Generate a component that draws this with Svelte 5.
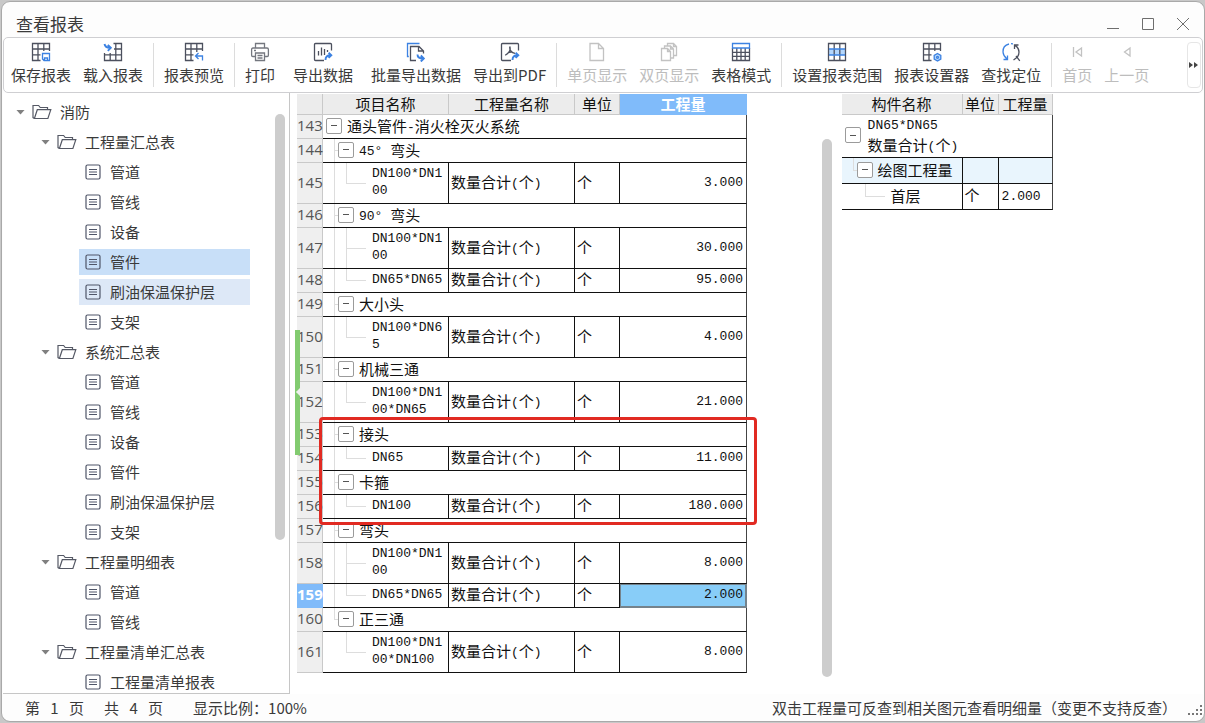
<script>
  const tools = [
    { icon: 'save', label: '保存报表' },
    { icon: 'load', label: '载入报表' },
    { sep: true },
    { icon: 'preview', label: '报表预览' },
    { sep: true },
    { icon: 'print', label: '打印', wide: true },
    { icon: 'export', label: '导出数据', wide: true },
    { icon: 'batch', label: '批量导出数据' },
    { icon: 'pdf', label: '导出到PDF' },
    { sep: true },
    { icon: 'single', label: '单页显示', off: true },
    { icon: 'double', label: '双页显示', off: true },
    { icon: 'table', label: '表格模式' },
    { sep: true },
    { icon: 'range', label: '设置报表范围' },
    { icon: 'config', label: '报表设置器' },
    { icon: 'find', label: '查找定位' },
    { sep: true },
    { icon: 'first', label: '首页', off: true },
    { icon: 'prev', label: '上一页', off: true }
  ];

  const groups = [
    { name: '工程量汇总表', items: ['管道', '管线', '设备', '管件', '刷油保温保护层', '支架'] },
    { name: '系统汇总表', items: ['管道', '管线', '设备', '管件', '刷油保温保护层', '支架'] },
    { name: '工程量明细表', items: ['管道', '管线'] },
    { name: '工程量清单汇总表', items: ['工程量清单报表'] }
  ];

  const rows = [
    { level: 0, name: '通头管件-消火栓灭火系统' },
    { level: 1, name: '45° 弯头' },
    { level: 2, name: 'DN100*DN100', amount: '3.000', tall: true, end: true },
    { level: 1, name: '90° 弯头' },
    { level: 2, name: 'DN100*DN100', amount: '30.000', tall: true },
    { level: 2, name: 'DN65*DN65', amount: '95.000', end: true },
    { level: 1, name: '大小头' },
    { level: 2, name: 'DN100*DN65', amount: '4.000', tall: true, end: true },
    { level: 1, name: '机械三通' },
    { level: 2, name: 'DN100*DN100*DN65', amount: '21.000', tall: true, end: true },
    { level: 1, name: '接头' },
    { level: 2, name: 'DN65', amount: '11.000', end: true },
    { level: 1, name: '卡箍' },
    { level: 2, name: 'DN100', amount: '180.000', end: true },
    { level: 1, name: '弯头' },
    { level: 2, name: 'DN100*DN100', amount: '8.000', tall: true },
    { level: 2, name: 'DN65*DN65', amount: '2.000', end: true, current: true },
    { level: 1, name: '正三通', lastGroup: true },
    { level: 2, name: 'DN100*DN100*DN100', amount: '8.000', tall: true, end: true, afterLast: true }
  ];

  // Half-width runs are set in the monospaced face, the rest in the CJK face.
  function runs(text) {
    return text.match(/[\u0020-\u00ff]+|[^\u0020-\u00ff]+/g) ?? [];
  }
  const isHalf = (run) => run.charCodeAt(0) < 256;
</script>

{#snippet mixed(text)}{#each runs(text) as run}{#if isHalf(run)}<span class="half">{run}</span>{:else}{run}{/if}{/each}{/snippet}

{#snippet toggle()}
  <button class="toggle" type="button" aria-label="折叠"><i></i></button>
{/snippet}

{#snippet folder()}
  <svg class="folder" viewBox="0 0 20 16" width="20" height="16">
    <path d="M2.6 14.5 1 13.6V1.5h5.6l1.6 2h7.3v2.2M2.4 14.5 5.3 5.7h13.5l-2.9 8.8z" />
  </svg>
{/snippet}

{#snippet glyph(name)}
  <svg class="glyph" viewBox="0 0 20 20" width="20" height="20">
    {#if name === 'save'}
      <path d="M18.500 9V1.500h-17v17h8M1.500 7h17M1.500 12.800h8M7 1.500v17M12.800 1.500V9" />
      <path class="blue" d="M11.500 11.500h7v7h-5.500l-1.500-1.500zM13.500 18.500v-2.500h3v2.500" />
    {:else if name === 'load'}
      <path d="M10.500 1.500h8v17h-17V11M18.500 7H11M18.500 12.800h-17M7.200 11v7.500M12.800 1.500v17" />
      <path class="blue thick" d="M1.500 2c.5 2.600 2 3.800 5.500 3.800M4.800 2.800l3 3-3 3" />
    {:else if name === 'preview'}
      <path d="M18.500 9V1.500h-17v17h8M1.500 7h17M1.500 12.800h8M7 1.500v17M12.800 1.500V10" />
      <path class="blue" d="M18.500 18.500v-4.500h-6.500M14.500 11l-3 3 3 3" />
    {:else if name === 'print'}
      <path d="M5.500 6V1.500h9V6M5 14.500H2.800a1.200 1.200 0 0 1-1.200-1.200V7.500Q1.600 6 3 6h14q1.400 0 1.400 1.500v5.800a1.200 1.200 0 0 1-1.200 1.200H15M5.500 11h9v7.500h-9zM7.500 13.500h5M7.500 16h5M4 8.500h2" />
    {:else if name === 'export'}
      <path d="M18.500 8.500v-6a1 1 0 0 0-1-1h-15a1 1 0 0 0-1 1v15a1 1 0 0 0 1 1h8.500M5.500 13.500V9M8.500 13.500v-8M11.500 13V7M14.500 10V8" />
      <path class="blue thick" d="M12.500 18c0-3.400 1.500-4.700 5-4.700M15.600 10.700l2.700 2.600-2.700 2.600" />
    {:else if name === 'batch'}
      <path class="blue" d="M2.800 14.500H1.500V1.500h12" />
      <path d="M10 18.500H4.500v-14h8.500l4.500 4.500v2.500M12.500 4.500V9h5" />
      <path class="blue thick" d="M11.500 12.500c0 3 1.500 4 5.500 4M14.800 13.500l3 3-3 3" />
    {:else if name === 'pdf'}
      <path d="M18.500 8.500v-6a1 1 0 0 0-1-1h-15a1 1 0 0 0-1 1v15a1 1 0 0 0 1 1h8.500M9.800 4.500c1 3 .2 6-4.600 8.800M9.800 4.500c-.5 4 1.500 6 5.200 6.800M7.600 11c1.800-.8 3.200-1 5-.7" />
      <path class="blue thick" d="M12.500 18c0-3.400 1.500-4.700 5-4.700M15.600 10.700l2.700 2.600-2.700 2.600" />
    {:else if name === 'single'}
      <path d="M3 1.500h8.500l5 5v12H3zM11.500 1.500v5h5" />
    {:else if name === 'double'}
      <path d="M2.500 6.500h6l3 3v9h-9zM8.500 6.500v3h3M5.500 6.500V4h6l3 3v9h-3M11.500 4v3h3M8.500 4V1.500h6l3 3v9h-3M14.500 1.500v3h3" />
    {:else if name === 'table'}
      <path d="M1.500 6v12.500h17V6M1.500 10.300h17M1.500 14.400h17M5.800 6v12.500M10 6v12.500M14.200 6v12.500" />
      <path class="blue" d="M1.500 6V1.500h17V6z" />
    {:else if name === 'range'}
      <rect class="tint" x="1.500" y="7" width="17" height="6" />
      <path d="M1.500 1.500h17v17h-17zM7.200 1.500v17M12.800 1.500v17" />
      <path class="blue" d="M2 7h16M2 13h16" />
    {:else if name === 'config'}
      <path d="M18.500 9V1.500h-17v17h8M1.500 7h17M1.500 12.800h8M7 1.500v17M12.800 1.500V9" />
      <path class="blue fill" d="m15.500 11.500 3.300 1.900v3.700l-3.300 1.900-3.300-1.900v-3.700z" />
      <circle class="blue" cx="15.500" cy="15.300" r="1" />
    {:else if name === 'find'}
      <path class="blue" d="M8 2C4 3 1.800 6 2 10c.2 3 1.500 5 4 7M10 1.700l2 .2M2.500 17.500h4v-4" />
      <path d="M17.500 3h-4v4M14 3.500c2.500 1.500 4 4 4 6.500 0 2-.5 3.500-1.500 5M16.500 15l-4 3M15 14l3.800 4.800" />
    {:else if name === 'first'}
      <path d="M6.500 5v10M14.500 6v8L9 10z" />
    {:else if name === 'prev'}
      <path d="M13 6v8l-5.500-4z" />
    {/if}
  </svg>
{/snippet}

<div class="window">
  <header class="titlebar">
    <h1>查看报表</h1>
    <div class="controls">
      <button type="button" aria-label="最小化"><svg viewBox="0 0 14 14" width="14" height="14"><path d="M1 11.500h12" /></svg></button>
      <button type="button" aria-label="最大化"><svg viewBox="0 0 14 14" width="14" height="14"><path d="M1.500 1.500h11v11h-11z" /></svg></button>
      <button type="button" aria-label="关闭"><svg viewBox="0 0 14 14" width="14" height="14"><path d="m1 1 12 12M13 1 1 13" /></svg></button>
    </div>
  </header>

  <div class="toolbar" role="toolbar">
    {#each tools as tool}
      {#if tool.sep}
        <span class="sep"></span>
      {:else}
        <button class="tool" class:wide={tool.wide} class:soft={tool.icon === 'print'} type="button" disabled={tool.off}>
          {@render glyph(tool.icon)}
          <span>{tool.label}</span>
        </button>
      {/if}
    {/each}
    <button class="more" type="button" aria-label="更多">
      <svg viewBox="0 0 10 8" width="10" height="8"><path d="M0 1v6l4-3zM5 1v6l4-3z" /></svg>
    </button>
  </div>

  <main>
    <nav class="tree">
      <ul>
        <li class="branch root"><i class="caret"></i>{@render folder()}<span>消防</span></li>
        {#each groups as group, g}
          <li class="branch"><i class="caret"></i>{@render folder()}<span>{group.name}</span></li>
          {#each group.items as item, n}
            <li class="leaf">
              <a href="#report" class:selected={g === 0 && n === 3} class:hovered={g === 0 && n === 4}>
                <svg viewBox="0 0 16 16" width="16" height="16"><rect x="1" y="1" width="14" height="14" rx="1.500" /><path d="M4 5.500h8M4 8h8M4 10.500h8" /></svg>
                <span>{item}</span>
              </a>
            </li>
          {/each}
        {/each}
      </ul>
      <div class="thumb"></div>
    </nav>

    <section class="pane report">
      <div class="splitgrip"></div>
      <div class="sheet">
        <table class="grid">
          <colgroup><col class="c-no" /><col class="c-name" /><col class="c-qty" /><col class="c-unit" /><col class="c-amount" /></colgroup>
          <thead>
            <tr><th></th><th>项目名称</th><th>工程量名称</th><th>单位</th><th class="active">工程量</th></tr>
          </thead>
          <tbody>
            {#each rows as row, n}
              <tr class:tall={row.tall}>
                <th class="no" class:active={row.current}>{143 + n}</th>
                {#if row.level < 2}
                  <td colspan="4" class="level{row.level} last" class:lastgroup={row.lastGroup}>
                    <div class="node">{@render toggle()}<span>{@render mixed(row.name)}</span></div>
                  </td>
                {:else}
                  <td class="level2 code" class:end={row.end} class:afterlast={row.afterLast}>{row.name}</td>
                  <td class="text">{@render mixed('数量合计(个)')}</td>
                  <td class="text">个</td>
                  <td class="amount code last" class:current={row.current}>{row.amount}</td>
                {/if}
              </tr>
            {/each}
          </tbody>
        </table>
        <div class="marker"></div>
      </div>
      <div class="thumb"></div>
    </section>

    <section class="pane detail">
      <table class="grid">
        <colgroup><col class="d-name" /><col class="d-unit" /><col class="d-amount" /></colgroup>
        <thead>
          <tr><th>构件名称</th><th>单位</th><th>工程量</th></tr>
        </thead>
        <tbody>
          <tr class="double">
            <td colspan="3" class="last">
              <div class="node">
                {@render toggle()}
                <div class="lines"><span class="code">DN65*DN65</span><span>{@render mixed('数量合计(个)')}</span></div>
              </div>
            </td>
          </tr>
          <tr class="tinted">
            <td class="level1 lastgroup"><div class="node">{@render toggle()}<span>绘图工程量</span></div></td>
            <td></td>
            <td class="last"></td>
          </tr>
          <tr>
            <td class="level2 end afterlast">首层</td>
            <td class="text">个</td>
            <td class="text code last">2.000</td>
          </tr>
        </tbody>
      </table>
    </section>
  </main>

  <footer>
    <span class="page">第</span><span class="num">1</span><span>页</span>
    <span class="total">共</span><span class="num">4</span><span>页</span>
    <span class="zoom">显示比例：100%</span>
    <span class="hint">双击工程量可反查到相关图元查看明细量（变更不支持反查）</span>
    <svg class="grip" viewBox="0 0 15 15" width="15" height="15"><path d="M12 2h2v2h-2zM12 6h2v2h-2zM12 10h2v2h-2zM8 6h2v2H8zM8 10h2v2H8zM4 10h2v2H4zM0 10h2v2H0z" /></svg>
  </footer>
</div>

<style>
  :global(body) {
    margin: 0;
    background: #c8c8c8;
  }
  .window {
    display: flex;
    flex-direction: column;
    box-sizing: border-box;
    height: calc(100vh - 2px);
    margin: 1px 0 1px 1px;
    padding: 0 1px;
    overflow: hidden;
    border: 1px solid #a9a9a9;
    border-radius: 9px;
    background: #fdfdfd;
    color: #3a3a3a;
    font: 15px/20px "Noto Sans CJK SC", sans-serif;
  }
  button {
    margin: 0;
    padding: 0;
    border: 0;
    background: none;
    color: inherit;
    font: inherit;
  }
  svg {
    display: block;
    flex: none;
    fill: none;
  }
  .titlebar {
    display: flex;
    flex: none;
    align-items: center;
    justify-content: space-between;
    height: 35px;
    padding: 0 13px;
  }
  h1 {
    margin: 0;
    padding-top: 8px;
    font-size: 17px;
    font-weight: 400;
    line-height: 24px;
  }
  .controls {
    display: flex;
    gap: 21px;
    padding-top: 9px;
  }
  .controls path {
    stroke: #6e6e6e;
  }
  .toolbar {
    display: flex;
    flex: none;
    align-items: center;
    box-sizing: border-box;
    height: 56px;
    padding-left: 1px;
    border: 1px solid #cfcfd2;
    border-radius: 5px;
    background: #fff;
  }
  .tool {
    display: flex;
    flex: none;
    flex-direction: column;
    align-items: center;
    gap: 3px;
    padding: 0 6px 4px;
    white-space: nowrap;
  }
  .tool.wide {
    padding-right: 12px;
  }
  .tool:disabled {
    color: #bdbdbd;
  }
  .glyph {
    stroke: #4c505e;
    stroke-width: 1.3;
  }
  .soft .glyph {
    stroke: #74777f;
  }
  .tool:disabled .glyph {
    stroke: #c2c2c2;
  }
  .glyph .blue {
    stroke: #3c82e2;
  }
  .glyph .thick {
    stroke-width: 1.9;
  }
  .glyph .fill {
    fill: #b4d6fb;
  }
  .glyph .tint {
    fill: #b4d6fb;
    stroke: none;
  }
  .sep {
    flex: none;
    width: 1px;
    height: 44px;
    margin: 0 4px;
    background: #dcdcdc;
  }
  .more {
    display: grid;
    place-items: center;
    box-sizing: border-box;
    width: 14px;
    height: 46px;
    margin: 0 1px 0 auto;
    border: 1px solid #e6e6e6;
    border-radius: 4px;
  }
  .more path {
    fill: #444;
  }
  main {
    display: grid;
    flex: 1;
    grid-template-columns: 287px minmax(0, 29fr) minmax(0, 19fr);
    min-height: 0;
    background: #fff;
  }
  .tree {
    display: flex;
    align-items: flex-start;
    min-height: 0;
    overflow: hidden;
    border-right: 1px solid #c6c6c6;
    border-bottom: 1px solid #c6c6c6;
  }
  ul {
    flex: 1;
    margin: 0;
    padding: 4px 0 0;
    list-style: none;
  }
  .branch,
  .leaf {
    display: flex;
    align-items: center;
    height: 30px;
    padding-left: 38px;
  }
  .branch.root {
    padding-left: 13px;
  }
  .leaf {
    padding-left: 76px;
  }
  .leaf a {
    display: flex;
    flex: 1;
    align-items: center;
    gap: 9px;
    height: 26px;
    margin-right: 25px;
    padding-left: 6px;
    color: inherit;
    text-decoration: none;
  }
  .leaf a.selected {
    background: #c8dff8;
  }
  .leaf a.hovered {
    background: #dde8f7;
  }
  .leaf svg {
    stroke: #4f5568;
    stroke-width: 1.2;
  }
  .caret {
    width: 9px;
    height: 5px;
    margin-right: 7px;
    background: #808080;
    clip-path: polygon(0 0, 100% 0, 50% 100%);
  }
  .folder {
    margin-right: 8px;
    stroke: #555965;
    stroke-width: 1.2;
  }
  .thumb {
    flex: none;
    width: 10px;
    border-radius: 5px;
    background: #cdcdcd;
  }
  .tree .thumb {
    height: 71%;
    margin: 21px 4px 0 0;
  }
  .pane {
    display: flex;
    align-items: flex-start;
    min-width: 0;
    padding-top: 1px;
  }
  .report {
    position: relative;
    padding-left: 7px;
  }
  .report .thumb {
    align-self: stretch;
    margin: 45px 10px 17px auto;
  }
  .splitgrip {
    position: absolute;
    top: 237px;
    left: 5px;
    z-index: 1;
    width: 5px;
    height: 125px;
    background: #82cb70;
    clip-path: polygon(0 0, 100% 0, 100% 58px, 1px 62px, 100% 66px, 100% 100%, 0 100%);
  }
  .sheet {
    position: relative;
  }
  .marker {
    position: absolute;
    top: 323px;
    left: 22px;
    box-sizing: border-box;
    width: 438px;
    height: 108px;
    border: 3px solid #e12a22;
    border-radius: 4px;
  }
  .grid {
    table-layout: fixed;
    border-spacing: 0;
    color: #111;
    line-height: 17px;
  }
  .report .grid {
    width: 450px;
  }
  .detail .grid {
    width: 211px;
  }
  .c-no { width: 26px; }
  .c-name, .c-qty { width: 126px; }
  .c-unit { width: 45px; }
  .c-amount { width: 127px; }
  .d-name { width: 121px; }
  .d-unit { width: 36px; }
  .d-amount { width: 54px; }
  th,
  td {
    box-sizing: border-box;
    height: 24px;
    padding: 0 0 2px;
    font-weight: 400;
  }
  td {
    border-right: 1px solid #111;
    border-bottom: 1px solid #111;
    text-align: left;
  }
  td.last {
    border-right-color: #444;
  }
  thead th {
    height: 21px;
    border-right: 1px solid #c9c9c9;
    border-bottom: 1px solid #c9c9c9;
    background: #ececec;
    white-space: nowrap;
  }
  .no {
    border-right: 1px solid #c9c9c9;
    border-bottom: 1px solid #c9c9c9;
    background: #efefef;
    color: #555;
    font-family: "Open Sans", sans-serif;
  }
  th.active {
    border-color: #80bbfa;
    background: #80bbfa;
    color: #fff;
    font-weight: 700;
  }
  .tall td,
  .tall th {
    height: 41px;
  }
  .half,
  .code {
    font-family: "Liberation Mono", monospace;
    font-size: 13px;
  }
  .half {
    line-height: 1;
    vertical-align: 1px;
  }
  .node {
    display: flex;
    align-items: center;
    gap: 5px;
    padding-left: 3px;
    white-space: nowrap;
  }
  .level1 .node {
    padding-left: 15px;
  }
  .lines {
    display: flex;
    flex-direction: column;
    gap: 2px;
    padding-left: 2px;
  }
  .toggle {
    display: grid;
    flex: none;
    place-items: center;
    box-sizing: border-box;
    width: 16px;
    height: 16px;
    border: 1px solid #9b9b9b;
    border-radius: 2px;
    background: #fff;
  }
  .toggle i {
    width: 6px;
    height: 1px;
    background: #555;
  }
  .level1 {
    background:
      linear-gradient(#ddd, #ddd) 11px 0 / 1px 100% no-repeat,
      linear-gradient(#ddd, #ddd) 11px 50% / 5px 1px no-repeat;
  }
  .level1.lastgroup {
    background-size: 1px 50%, 5px 1px;
  }
  .level2 {
    padding-left: 49px;
    background:
      linear-gradient(#ddd, #ddd) 23px 0 / 1px 100% no-repeat,
      linear-gradient(#ddd, #ddd) 23px 50% / 20px 1px no-repeat,
      linear-gradient(#ddd, #ddd) 11px 0 / 1px 100% no-repeat;
    word-break: break-all;
  }
  .level2.end {
    background-size: 1px 50%, 20px 1px, 1px 100%;
  }
  .level2.afterlast {
    background-size: 1px 50%, 20px 1px, 0 0;
  }
  .text {
    padding-bottom: 4px;
    padding-left: 2px;
    white-space: nowrap;
  }
  .text.code {
    padding-bottom: 0;
    padding-left: 3px;
  }
  .amount {
    padding-right: 3px;
    text-align: right;
  }
  .amount.current {
    border-color: #75838c;
    background: #88cdf8;
    box-shadow: inset 1px 1px #75838c, inset -1px -1px #75838c;
  }
  .double td {
    height: 43px;
  }
  .detail tbody tr:not(.double) td {
    height: 26px;
  }
  .tinted td {
    background-color: #e9f5fd;
  }
  footer {
    display: flex;
    flex: none;
    align-items: center;
    height: 26px;
    padding: 1px 0 0 22px;
    white-space: nowrap;
  }
  .num {
    width: 29px;
    text-align: center;
  }
  .total {
    margin-left: 20px;
  }
  .zoom {
    margin-left: 30px;
  }
  .hint {
    margin-left: auto;
  }
  .grip {
    margin: 4px 0 0 11px;
  }
  .grip path {
    fill: #777;
  }
</style>
